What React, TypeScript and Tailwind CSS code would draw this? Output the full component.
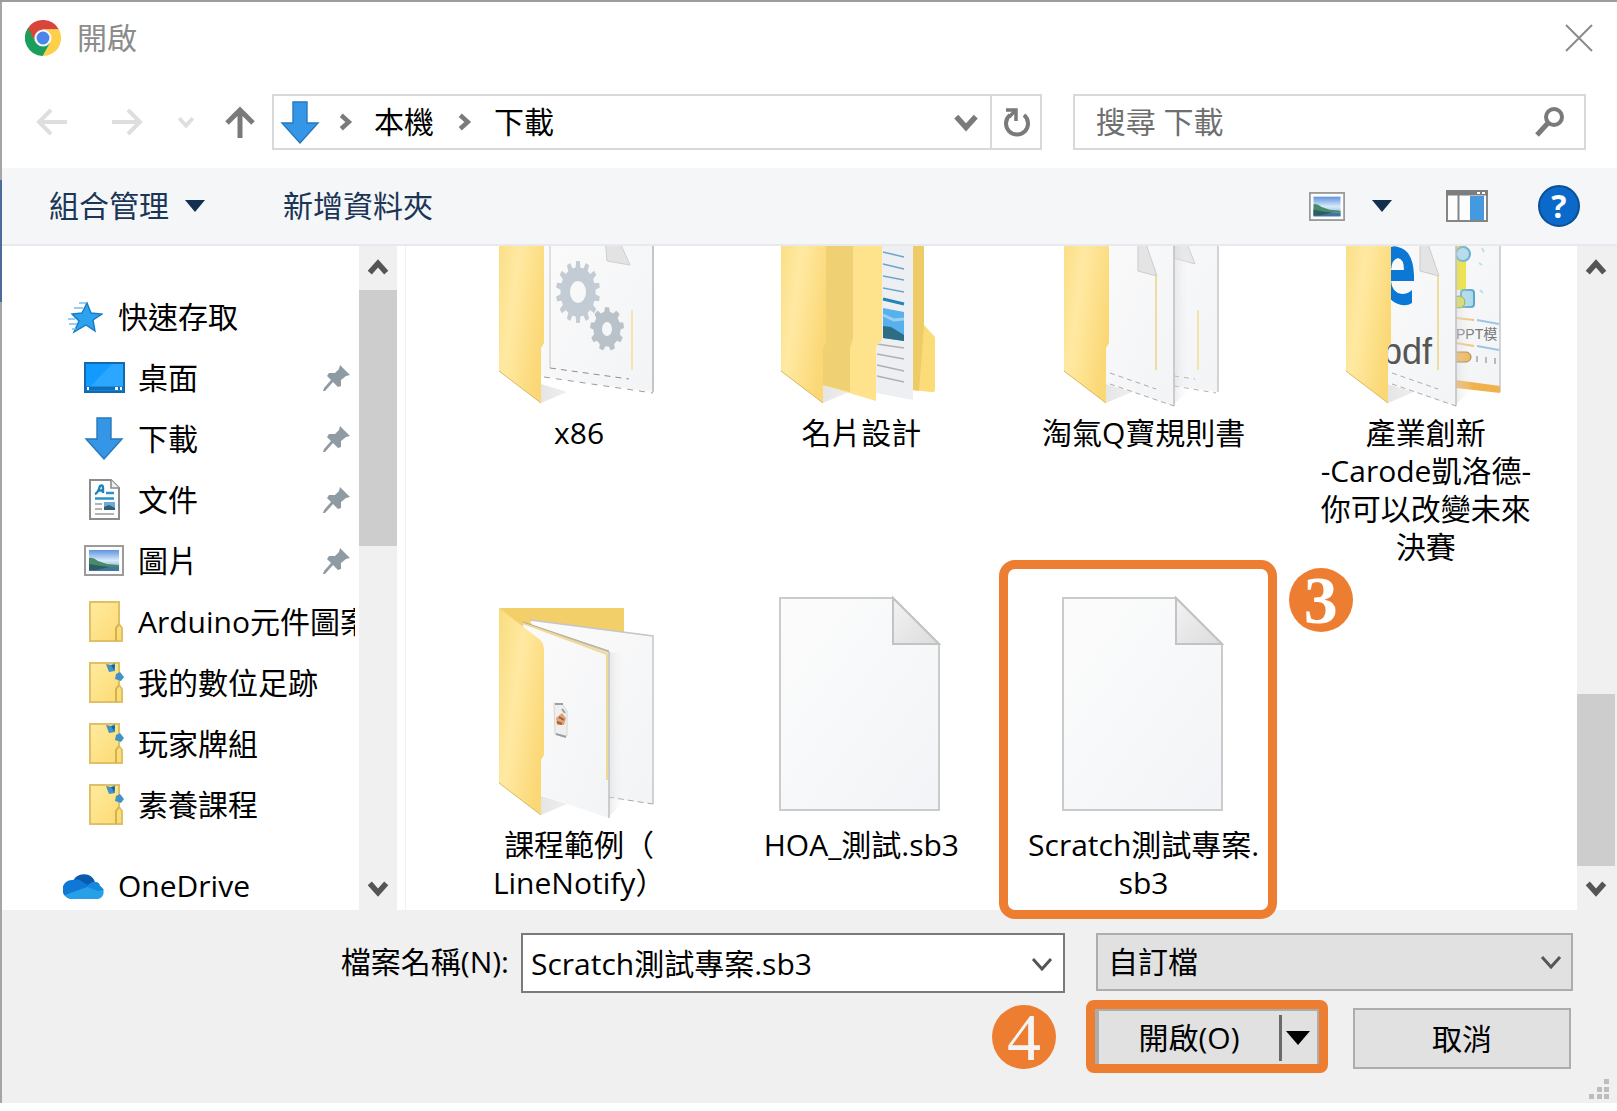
import React from "react";

const ink = "#7a7a7a";

function ChromeLogo() {
  return (
    <svg width="36" height="36" viewBox="0 0 36 36" aria-hidden="true">
      <path d="M18 9.5 H33.9 L33.6 9 A18 18 0 0 0 2.4 9 L10.5 22 Z" fill="#d8453a" />
      <path d="M25.4 22.2 L17.6 36 A18 18 0 0 0 33.9 9.5 H18 Z" fill="#fdd047" />
      <path d="M10.6 22.2 L3 8 A18 18 0 0 0 17.6 36 L25.4 22.2 Z" fill="#1a9f5b" />
      <circle cx="18" cy="18" r="8.6" fill="#f4f6fa" />
      <circle cx="18" cy="18" r="6.4" fill="#4a86e8" />
    </svg>
  );
}

function DownArrow() {
  return (
    <svg width="40" height="43" viewBox="0 0 40 43" aria-hidden="true">
      <path d="M13 1 H27 V22 H38 L20 42 L2 22 H13 Z" fill="#3595e6" stroke="#2878bd" strokeWidth="1.4" />
    </svg>
  );
}

function Chevron({ dir, size, color, weight }: { dir: "up" | "down" | "right"; size: number; color: string; weight: number }) {
  const d = dir === "up" ? "M3 17 L12 7 L21 17" : dir === "down" ? "M3 7 L12 17 L21 7" : "M7 3 L17 12 L7 21";
  return (
    <svg width={size} height={size} viewBox="0 0 24 24" fill="none" stroke={color} strokeWidth={weight} aria-hidden="true">
      <path d={d} />
    </svg>
  );
}

function Triangle({ color }: { color: string }) {
  return (
    <svg width="20" height="12" viewBox="0 0 20 12" aria-hidden="true">
      <path d="M0 0 H20 L10 12 Z" fill={color} />
    </svg>
  );
}

function PictureIcon({ width, height }: { width: number; height: number }) {
  return (
    <svg width={width} height={height} viewBox="0 0 40 31" preserveAspectRatio="none" aria-hidden="true">
      <defs>
        <linearGradient id="sky" x1="0" y1="0" x2="0" y2="1">
          <stop offset="0" stopColor="#5f93e0" />
          <stop offset="0.5" stopColor="#d6eaf8" />
          <stop offset="1" stopColor="#6fa3cc" />
        </linearGradient>
      </defs>
      <rect x="1" y="1" width="38" height="29" fill="#fdfdfd" stroke="#9b9b9b" strokeWidth="2" />
      <rect x="5" y="5" width="30" height="21" fill="url(#sky)" />
      <path d="M5 13 Q9 12 14 16 L23 19 L35 20 V22 H5 Z" fill="#4a8a6c" />
      <path d="M5 22 H35 V26 H5 Z" fill="#44759f" />
      <path d="M5 19 L17 21 L26 22 L12 25 L5 25 Z" fill="#2c5e63" />
    </svg>
  );
}

function StarIcon() {
  return (
    <svg width="38" height="34" viewBox="0 0 38 34" aria-hidden="true">
      <path d="M22 3 L26 13 L37 14 L28 20 L30 31 L21 25 L9 32 L14 21 L7 14 L17 13 Z" fill="#2da3ef" stroke="#1979c4" strokeWidth="1.4" />
      <path d="M14 3 H21 M9 8 H18 M4 24 H12 M7 29 H11 M3 19 H10" stroke="#74bdf0" strokeWidth="1.6" />
    </svg>
  );
}

function DesktopIcon() {
  return (
    <svg width="41" height="31" viewBox="0 0 41 31" aria-hidden="true">
      <rect x="1" y="1" width="39" height="29" fill="#129bff" stroke="#1269ae" strokeWidth="2" />
      <path d="M28 2 H39 V25 H6 Z" fill="#2ba7ff" />
      <path d="M2 26.500 H39" stroke="#0c70bd" strokeWidth="4" />
      <path d="M3 26.500 H5 M31 26.500 H34 M36 26.500 H38" stroke="#fff" strokeWidth="3" />
    </svg>
  );
}

function DocumentIcon() {
  return (
    <svg width="31" height="41" viewBox="0 0 31 41" aria-hidden="true">
      <path d="M1 1 H22 L30 9 V40 H1 Z" fill="#fdfdfd" stroke="#8b8b8b" strokeWidth="2" />
      <path d="M22 1 V9 H30" fill="#eee" stroke="#8b8b8b" strokeWidth="1.600" />
      <path d="M6 15 Q9 14 11 7 Q14 5 14 9 V14 M9 11.500 H15" fill="none" stroke="#1c83b8" strokeWidth="2.400" />
      <path d="M17 14 H25 M6 19.500 H25" stroke="#2d93c4" strokeWidth="2.400" />
      <path d="M6 25 H13 M6 30 H13 M6 35 H25" stroke="#9a9a9a" strokeWidth="1.600" />
      <rect x="15" y="23" width="11" height="8" fill="#6aaad8" />
      <path d="M15 28 L20 26 L26 29 V31 H15 Z" fill="#2f5f74" />
    </svg>
  );
}

function FolderIcon({ synced }: { synced?: boolean }) {
  return (
    <svg width="42" height="42" viewBox="-6 0 42 42" aria-hidden="true">
      <defs>
        <linearGradient id="folderSmall" x1="0" y1="0" x2="1" y2="1">
          <stop offset="0" stopColor="#ffeb9f" />
          <stop offset="1" stopColor="#fbda71" />
        </linearGradient>
      </defs>
      <path d="M1 1 H30 V23 L33 27 V40 H1 Z" fill="url(#folderSmall)" stroke="#dfc066" strokeWidth="2" />
      <path d="M27 40 V27 L30 23" fill="none" stroke="#d5b14e" strokeWidth="2" />
      {synced && (
        <g fill="#3f93c8">
          <path d="M17 2 L22 3 L26 1 V9 L20 10 Z" />
          <path d="M27 12 L31 10 L35 15 L32 19 L26 17 Z" />
          <path d="M22 3 L26 3 L25 8 Z" fill="#17658f" />
        </g>
      )}
    </svg>
  );
}

function CloudIcon() {
  return (
    <svg width="42" height="28" viewBox="0 0 42 28" aria-hidden="true">
      <path d="M10 9 A12 12 0 0 1 32 10 L24 19 Z" fill="#0a5bb0" />
      <path d="M8 27 A9 9 0 0 1 10 8 Q15 6 20 10 L33 18 L20 27 Z" fill="#0f78d4" />
      <path d="M24 15 Q27 10 32 10 Q36 10 37 14 A7 7 0 0 1 35 27 H8 Q4 26 2 23 Z" fill="#28a0e8" />
      <path d="M24 15 Q27 10 32 10 Q36 10 37 14 L41 18 L35 19 Z" fill="#1589dc" />
    </svg>
  );
}

function PinIcon() {
  return (
    <svg width="28" height="28" viewBox="0 0 28 28" aria-hidden="true">
      <path d="M17 1 L27 11 L23 12 L18 16 L18 22 L15 23 L10 18 L2 27 L0 27 L1 24 L8 16 L4 12 L6 9 L12 9 L16 5 Z" fill="#8f9ba3" />
    </svg>
  );
}

function FolderFrame({ top, children }: { top?: boolean; children?: React.ReactNode }) {
  return (
    <svg width="184" height="230" viewBox="0 0 184 230" aria-hidden="true" className="shrink-0">
      <defs>
        <linearGradient id="flap" x1="0" y1="0" x2="1" y2="0.6">
          <stop offset="0" stopColor="#f9dc7e" />
          <stop offset="0.45" stopColor="#ffe9a2" />
          <stop offset="1" stopColor="#fbd876" />
        </linearGradient>
        <linearGradient id="paper" x1="0" y1="0" x2="1" y2="1">
          <stop offset="0" stopColor="#fbfbfb" />
          <stop offset="1" stopColor="#f3f4f6" />
        </linearGradient>
        <linearGradient id="shade" x1="0" y1="0" x2="1" y2="0">
          <stop offset="0" stopColor="#d4d4d4" />
          <stop offset="1" stopColor="#ffffff" stopOpacity="0" />
        </linearGradient>
      </defs>
      <path d="M54 225 V206 L80 214 Z M166 214 V203 L184 206 Z" fill="url(#shade)" opacity="0.6" />
      {top && <path d="M12 18 H137 V60 H40 Z" fill="#f3cf6a" />}
      {children}
      <path d="M12 18 L52 49 Q57 53 57 60 V165 L54 170 V225 L12 193 Z" fill="url(#flap)" />
      <path d="M12 193 L54 225" stroke="#d9b95c" strokeWidth="1" />
    </svg>
  );
}

function gearPath(cx: number, cy: number, rx: number, ry: number, teeth: number) {
  const pts: string[] = [];
  for (let i = 0; i < teeth; i++) {
    [[-0.3, 0.8], [-0.18, 1], [0.18, 1], [0.3, 0.8]].forEach(([o, r]) => {
      const a = ((i + o) / teeth) * Math.PI * 2 - Math.PI / 2;
      pts.push(`${(cx + Math.cos(a) * rx * r).toFixed(1)} ${(cy + Math.sin(a) * ry * r).toFixed(1)}`);
    });
  }
  return `M${pts.join(" L")} Z`;
}

function hole(cx: number, cy: number, rx: number, ry: number) {
  return ` M${cx - rx} ${cy} a${rx} ${ry} 0 1 0 ${rx * 2} 0 a${rx} ${ry} 0 1 0 ${-rx * 2} 0 Z`;
}

function GearFolder() {
  return (
    <FolderFrame>
      <path d="M50 30 L166 46 V214 L50 198 Z" fill="url(#paper)" />
      <path d="M166 46 V214" stroke="#c3c5c8" strokeWidth="2" />
      <path d="M63 60 V190" fill="none" stroke="#c6c6c6" />
      <path d="M63 190 L142 201" stroke="#8e8e8e" strokeDasharray="6 5" />
      <path d="M57 199 L166 215" stroke="#9b9b9b" strokeDasharray="6 6" />
      <path d="M118 60 L120 83 L143 87 L131 60 Z" fill="#e3e3e3" stroke="#cfcfcf" />
      <path d="M145 132 V192" stroke="#f3e3ae" strokeWidth="2" />
      <path fillRule="evenodd" fill="#c3ccd4" d={gearPath(91, 114, 22, 31, 14) + hole(91, 114, 8, 11)} />
      <path fillRule="evenodd" fill="#b9c2c9" d={gearPath(120, 151, 17, 22, 9) + hole(120, 151, 5, 7)} />
    </FolderFrame>
  );
}

function NestedFolder() {
  return (
    <FolderFrame>
      <path d="M144 50 H155 V147 L166 159 V211 Q166 215 162 214 L144 212 Z" fill="#fcdc79" />
      <path d="M144 50 H155 V147 L150 213 L144 212 Z" fill="#edcb67" />
      <path d="M107 40 H144 V222 L107 215 Z" fill="#eeeff2" />
      <path d="M114 74 L135 79 M114 86 L135 91 M114 98 L135 102 M114 110 L135 114" stroke="#6ba6cb" strokeWidth="1.500" />
      <path d="M114 121 L135 126" stroke="#2583b8" strokeWidth="3" />
      <path d="M114 130 L135 134 V163 L114 160 Z" fill="#58b0ec" />
      <path d="M114 148 L122 149 L135 157 V163 L114 160 Z" fill="#2d6c83" />
      <path d="M114 137 L125 142 L135 141" stroke="#9ad0f2" strokeWidth="3" fill="none" />
      <path d="M108 166 L135 170 M108 176 L135 181 M108 187 L135 193 M108 198 L135 204" stroke="#aeb0b3" strokeWidth="1.500" />
      <path d="M50 40 H113 V162 L107 169 V223 L50 206 Z" fill="#ffe28c" />
      <path d="M50 40 H84 V160 L81 170 V214 L50 206 Z" fill="#efd173" />
    </FolderFrame>
  );
}

function TwoPages({ first, second }: { first?: React.ReactNode; second?: React.ReactNode }) {
  return (
    <>
      <path d="M43 30 L166 46 V214 L110 206 Z" fill="url(#paper)" />
      <path d="M43 30 L166 46 V214" fill="none" stroke="#c4c6c8" strokeWidth="1.500" />
      {second ?? (
        <>
          <path d="M122 80 L143 86 L133 60 L122 60 Z" fill="#e7e7e7" stroke="#cfcfcf" />
          <path d="M146 132 V192" stroke="#f3e3ae" strokeWidth="2" />
          <path d="M122 198 L143 201 M122 208 L164 215" stroke="#b0b0b0" strokeDasharray="5 5" />
        </>
      )}
      <path d="M122 62 L140 64 V210 L122 226 Z" fill="url(#shade)" opacity="0.45" />
      <path d="M36 33 L122 62 V228 L50 204 Z" fill="url(#paper)" />
      <path d="M36 33 L122 62 V228" fill="none" stroke="#bfc0c2" strokeWidth="1.500" />
      {first}
    </>
  );
}

function PageFold() {
  return (
    <>
      <path d="M86 60 V93 L105 98 L92 60 Z" fill="#e4e4e4" stroke="#cccccc" />
      <path d="M104 98 V192" stroke="#f1dca0" strokeWidth="2" />
      <path d="M58 195 L104 211 M58 206 L122 228" stroke="#ababab" strokeDasharray="5 4" />
    </>
  );
}

function PagesFolder() {
  return (
    <FolderFrame>
      <TwoPages first={<PageFold />} />
    </FolderFrame>
  );
}

function PdfFolder() {
  return (
    <FolderFrame>
      <TwoPages
        first={
          <>
            <PageFold />
            <path
              fillRule="evenodd"
              fill="#0a78d4"
              d="M50 76 Q56 66 64 69 Q79 72 80 97 V103 H57 Q58 115 68 116 Q74 116 78 112 V125 Q72 129 64 126 Q52 122 50 104 Z M57 92 H70 Q70 81 64 80 Q58 81 57 92 Z"
            />
            <text x="48" y="186" fontSize="36" fill="#555" fontFamily="Liberation Sans, sans-serif">pdf</text>
          </>
        }
        second={
          <>
            <path d="M122 60 H132 V112 H122 Z" fill="#efe21b" />
            <circle cx="129" cy="76" r="7" fill="#a7d9ec" stroke="#5ba6c6" strokeWidth="2" />
            <rect x="127" y="112" width="13" height="17" rx="3" fill="#a7d9ec" stroke="#5ba6c6" strokeWidth="2" />
            <circle cx="125" cy="124" r="6" fill="#d5d94a" stroke="#7c9a3a" />
            <path d="M145 85 l3 2 M148 70 l2 4 M146 112 l3 3" stroke="#bcdff0" strokeWidth="2" />
            <path d="M122 140 L140 142 M122 165 L140 168" stroke="#f1c27c" strokeWidth="2" />
            <path d="M143 142 L165 146 M143 168 L165 172" stroke="#9fc4e0" strokeWidth="2" />
            <text x="122" y="161" fontSize="14" fill="#777" fontFamily="Liberation Sans, Noto Sans CJK TC, sans-serif">PPT模</text>
            <rect x="117" y="174" width="20" height="10" rx="5" fill="#f0b04e" stroke="#9c7b4a" />
            <path d="M143 178 v6 M152 179 v6 M161 180 v6" stroke="#b9b9b9" strokeWidth="2" />
            <path d="M122 202 L166 208 V215 L122 210 Z" fill="#efb14e" />
          </>
        }
      />
    </FolderFrame>
  );
}

function CourseFolder() {
  return (
    <FolderFrame top>
      <TwoPages
        first={
          <>
            <path d="M36 33 L120 64 V190" fill="none" stroke="#f1d995" strokeWidth="2" />
            <path d="M36 32 L122 61" stroke="#b8ac8a" />
            <path d="M67 113 L76 115 L80 121 V146 L68 144 Z" fill="#efefef" stroke="#d6d6d6" />
            <path d="M68 114 h8 M75 119 l3 4 M69 144 l10 3" stroke="#9aa0a2" strokeWidth="2" />
            <path d="M69 128 l6 -5 l4 5 l-2 7 l-7 0 Z" fill="#e0a477" />
            <path d="M72 127 l5 3 M70 132 l5 2" stroke="#9c5f3e" strokeWidth="2" />
          </>
        }
        second={<path d="M121 207 L166 214" stroke="#a9a9a9" strokeDasharray="6 4" />}
      />
    </FolderFrame>
  );
}

function BlankFile() {
  return (
    <svg width="184" height="230" viewBox="0 0 184 230" aria-hidden="true" className="shrink-0">
      <defs>
        <linearGradient id="sheet" x1="0" y1="0" x2="1" y2="1">
          <stop offset="0" stopColor="#fcfcfc" />
          <stop offset="1" stopColor="#f2f4f7" />
        </linearGradient>
        <linearGradient id="corner" x1="0" y1="0" x2="1" y2="1">
          <stop offset="0" stopColor="#f3f3f3" />
          <stop offset="1" stopColor="#dcdcdc" />
        </linearGradient>
      </defs>
      <path d="M11 8 H124 L170 54 V220 H11 Z" fill="url(#sheet)" stroke="#cacccc" strokeWidth="2" />
      <path d="M124 8 V54 H170 Z" fill="url(#corner)" stroke="#c3c3c3" strokeWidth="2" />
    </svg>
  );
}

type Place = { label: string; icon: React.ReactNode; pinned?: boolean; root?: boolean };

const places: Place[] = [
  { label: "快速存取", icon: <StarIcon />, root: true },
  { label: "桌面", icon: <DesktopIcon />, pinned: true },
  { label: "下載", icon: <DownArrow />, pinned: true },
  { label: "文件", icon: <DocumentIcon />, pinned: true },
  { label: "圖片", icon: <PictureIcon width={40} height={31} />, pinned: true },
  { label: "Arduino元件圖案", icon: <FolderIcon /> },
  { label: "我的數位足跡", icon: <FolderIcon synced /> },
  { label: "玩家牌組", icon: <FolderIcon synced /> },
  { label: "素養課程", icon: <FolderIcon synced /> },
];

type Item = { lines: string[]; icon: React.ReactNode; step?: string };

const items: Item[] = [
  { lines: ["x86"], icon: <GearFolder /> },
  { lines: ["名片設計"], icon: <NestedFolder /> },
  { lines: ["淘氣Q寶規則書"], icon: <PagesFolder /> },
  { lines: ["產業創新", "-Carode凱洛德-", "你可以改變未來", "決賽"], icon: <PdfFolder /> },
  { lines: ["課程範例（", "LineNotify）"], icon: <CourseFolder /> },
  { lines: ["HOA_測試.sb3"], icon: <BlankFile /> },
  { lines: ["Scratch測試專案.", "sb3"], icon: <BlankFile />, step: "3" },
];

function PlaceRow({ place }: { place: Place }) {
  return (
    <li>
      <button type="button" className={`flex h-[61px] w-full items-center gap-3 pr-2 ${place.root ? "pl-[60px]" : "pl-20"}`}>
        <span className="flex w-11 shrink-0 justify-center">{place.icon}</span>
        <span className="-mr-1 min-w-0 flex-1 overflow-x-clip whitespace-nowrap text-left">{place.label}</span>
        {place.pinned && <PinIcon />}
      </button>
    </li>
  );
}

function ScrollBar({ before, thumb, after }: { before: string; thumb: string; after: string }) {
  return (
    <div className="flex w-[38px] shrink-0 flex-col items-center bg-[#f0f0f0]">
      <button type="button" aria-label="向上捲動" className="flex h-11 w-full items-center justify-center">
        <Chevron dir="up" size={22} color="#555555" weight={6} />
      </button>
      <div className={before} />
      <div className={`w-full bg-[#cdcdcd] ${thumb}`} />
      <div className={after} />
      <button type="button" aria-label="向下捲動" className="flex h-11 w-full items-center justify-center">
        <Chevron dir="down" size={22} color="#555555" weight={6} />
      </button>
    </div>
  );
}

export default function App() {
  return (
    <div className="flex h-screen min-h-[900px] flex-col bg-white pb-2 font-['Open_Sans','Noto_Sans_CJK_TC',sans-serif] text-[30px] leading-[38px] text-black">
      <div className="flex min-h-0 flex-1 border-t-2 border-[#9c9c9c]">
        <div className="w-[2px] shrink-0 bg-[linear-gradient(#a5a5a5_0_178px,#4d6b9a_178px_300px,#a5a5a5_300px)]" />
        <div className="flex min-w-0 flex-1 flex-col">
          <header className="flex h-[72px] shrink-0 items-center pl-[23px] pr-6">
            <ChromeLogo />
            <h1 className="ml-4 flex-1 text-[#8c8c8c]">開啟</h1>
            <button type="button" aria-label="關閉">
              <svg width="28" height="28" viewBox="0 0 28 28" stroke="#8b8b8b" strokeWidth="2" aria-hidden="true">
                <path d="M1 1 L27 27 M27 1 L1 27" />
              </svg>
            </button>
          </header>

          <nav className="flex h-[94px] shrink-0 items-center pl-3 pr-[31px] pt-[2px]">
            <button type="button" aria-label="上一頁" className="flex w-[75px] justify-center">
              <svg width="32" height="28" viewBox="0 0 32 28" fill="none" stroke="#dedede" strokeWidth="4" aria-hidden="true">
                <path d="M31 14 H3 M15 2 L3 14 L15 26" />
              </svg>
            </button>
            <button type="button" aria-label="下一頁" className="flex w-[75px] justify-center">
              <svg width="32" height="28" viewBox="0 0 32 28" fill="none" stroke="#dedede" strokeWidth="4" aria-hidden="true">
                <path d="M1 14 H29 M17 2 L29 14 L17 26" />
              </svg>
            </button>
            <button type="button" aria-label="最近的位置" className="flex w-11 justify-center">
              <Chevron dir="down" size={18} color="#dedede" weight={5} />
            </button>
            <button type="button" aria-label="上一層" className="flex w-16 justify-center">
              <svg width="30" height="32" viewBox="0 0 30 32" fill="none" stroke={ink} strokeWidth="5" aria-hidden="true">
                <path d="M15 32 V4 M2 17 L15 4 L28 17" />
              </svg>
            </button>
            <div className="grid min-w-0 flex-1 grid-cols-[3fr_2fr] gap-[31px]">
              <div className="flex h-14 min-w-0 border-2 border-[#d9d9d9]">
                <div className="flex flex-1 items-center pl-[6px]">
                  <DownArrow />
                  <span className="ml-4"><Chevron dir="right" size={18} color={ink} weight={6} /></span>
                  <button type="button" className="ml-5">本機</button>
                  <span className="mx-[21px]"><Chevron dir="right" size={18} color={ink} weight={6} /></span>
                  <button type="button">下載</button>
                </div>
                <button type="button" aria-label="先前的位置" className="flex w-12 items-center justify-center">
                  <Chevron dir="down" size={26} color={ink} weight={5} />
                </button>
                <button type="button" aria-label="重新整理" className="flex w-[50px] items-center justify-center border-l-2 border-[#d9d9d9]">
                  <svg width="28" height="32" viewBox="0 0 28 32" fill="none" stroke={ink} strokeWidth="4" aria-hidden="true">
                    <path d="M22 9 A11 11 0 1 1 8 9" />
                    <path d="M4 4 H14 V15 M14 4 L7 11" strokeWidth="3.500" />
                  </svg>
                </button>
              </div>
              <label className="flex h-14 min-w-0 items-center border-2 border-[#d9d9d9] pl-[21px] pr-[19px]">
                <input type="search" aria-label="搜尋 下載" placeholder="搜尋 下載" className="min-w-0 flex-1 outline-none placeholder:text-[#6f6f6f]" />
                <svg width="30" height="30" viewBox="0 0 30 30" fill="none" stroke={ink} aria-hidden="true">
                  <circle cx="19" cy="10" r="8" strokeWidth="4" />
                  <path d="M13 16 L2 28" strokeWidth="5" />
                </svg>
              </label>
            </div>
          </nav>

          <div className="relative z-10 flex h-[78px] shrink-0 items-center border-b-2 border-[#e7e9ec] bg-[#f4f6f8] pl-[47px] pr-[37px] text-[#1b3556]">
            <button type="button" className="flex items-center gap-4">
              組合管理
              <Triangle color="#15304f" />
            </button>
            <button type="button" className="ml-[78px]">新增資料夾</button>
            <div className="ml-auto flex items-center">
              <button type="button" aria-label="檢視"><PictureIcon width={36} height={29} /></button>
              <button type="button" aria-label="更多檢視選項" className="ml-[27px] flex"><Triangle color="#15304f" /></button>
              <button type="button" aria-label="預覽窗格" className="ml-[54px]">
                <svg width="42" height="32" viewBox="0 0 42 32" aria-hidden="true">
                  <rect x="1" y="1" width="40" height="30" fill="#fdfdfd" stroke="#858585" strokeWidth="2" />
                  <path d="M0 3 H42" stroke="#7d7d7d" strokeWidth="5" />
                  <path d="M31 3 h3 M36 3 h3" stroke="#fff" strokeWidth="2" />
                  <path d="M12.500 5 V30" stroke="#858585" strokeWidth="2" />
                  <rect x="24" y="6" width="14" height="24" fill="#4499e0" />
                </svg>
              </button>
              <button type="button" aria-label="說明" className="ml-[50px] flex size-[42px] items-center justify-center rounded-full border-2 border-[#0c4f94] bg-[#0a69c9] text-[32px] font-bold text-white">
                ?
              </button>
            </div>
          </div>

          <main className="flex min-h-0 flex-1">
            <aside className="flex w-[395px] shrink-0">
              <div className="min-w-0 flex-1 pt-10">
                <ul>
                  {places.map((p) => <PlaceRow key={p.label} place={p} />)}
                </ul>
                <ul className="pt-5">
                  <PlaceRow place={{ label: "OneDrive", icon: <CloudIcon />, root: true }} />
                </ul>
              </div>
              <ScrollBar before="h-0" thumb="h-64" after="flex-1" />
            </aside>
            <section className="ml-2 flex min-w-0 flex-1 flex-col justify-end border-l border-[#f0f0f0] pb-2 pl-8 pr-[10px]">
              <div className="grid grid-cols-4 gap-y-6">
                {items.map((item) => (
                  <div key={item.lines.join("")} className="relative flex justify-center">
                    <button type="button" className="flex flex-col items-center justify-start gap-[6px]">
                      {item.icon}
                      <span className="block text-center">
                        {item.lines.map((line) => (
                          <span key={line} className="block whitespace-nowrap">{line}</span>
                        ))}
                      </span>
                    </button>
                    {item.step && (
                      <>
                        <div className="pointer-events-none absolute -bottom-[17px] -left-1 -top-[30px] right-2 z-10 rounded-2xl border-[9px] border-[#ed7d31]" />
                        <div className="absolute -right-[68px] -top-[22px] flex size-16 items-center justify-center rounded-full bg-[#ed7d31] font-['Liberation_Serif',serif] text-[68px] font-bold leading-none text-white">
                          {item.step}
                        </div>
                      </>
                    )}
                  </div>
                ))}
              </div>
            </section>
            <ScrollBar before="flex-1" thumb="h-[172px]" after="h-0" />
            <div className="w-[2px] shrink-0 bg-[#f0f0f0]" />
          </main>

          <footer className="relative shrink-0 bg-[#f0f0f0] pb-[30px] pt-[23px]">
            <div className="flex items-start pr-11">
              <label htmlFor="filename" className="w-[519px] shrink-0 pr-3 pt-[10px] text-right">檔案名稱(N):</label>
              <div className="flex h-[60px] min-w-0 flex-1 items-center border-2 border-[#7a7a7a] bg-white pl-2 pr-[9px] pt-[2px]">
                <input id="filename" type="text" defaultValue="Scratch測試專案.sb3" className="min-w-0 flex-1 outline-none" />
                <button type="button" aria-label="顯示檔案清單"><Chevron dir="down" size={24} color="#555555" weight={3} /></button>
              </div>
              <div className="relative ml-[31px] w-[477px] shrink-0">
                <select aria-label="檔案類型" className="h-[58px] w-full appearance-none border-2 border-[#adadad] bg-[#e1e1e1] pl-[10px] outline-none">
                  <option>自訂檔</option>
                </select>
                <span className="pointer-events-none absolute right-[10px] top-[17px]"><Chevron dir="down" size={24} color="#555555" weight={3} /></span>
              </div>
            </div>
            <div className="mt-[7px] flex items-center justify-end pr-[46px]">
              <div className="mr-[30px] flex size-16 items-center justify-center rounded-full bg-[#ed7d31] font-['Liberation_Serif',serif] text-[68px] leading-none text-[#f4f4f4]">
                4
              </div>
              <div className="flex h-[73px] w-[242px] rounded-lg border-[9px] border-[#ed7d31] bg-[#e1e1e1]">
                <button type="button" className="flex-1 border-l-4 border-t-2 border-[#adadad]">開啟(O)</button>
                <button type="button" aria-label="開啟選項" className="flex w-10 items-center border-r-2 border-t-2 border-[#adadad]">
                  <span className="mr-1 h-[46px] w-[3px] bg-[#6a6a6a]" />
                  <svg width="24" height="14" viewBox="0 0 24 14" aria-hidden="true"><path d="M0 0 H24 L12 14 Z" fill="#000" /></svg>
                </button>
              </div>
              <button type="button" className="ml-[25px] mt-1 h-[61px] w-[218px] border-2 border-[#adadad] bg-[#e1e1e1]">取消</button>
            </div>
            <svg width="20" height="20" viewBox="0 0 20 20" fill="#bdbdbd" className="absolute bottom-1 right-2" aria-hidden="true">
              <path d="M15 0 h5 v5 h-5 Z M15 8 h5 v5 h-5 Z M8 8 h5 v5 h-5 Z M15 15 h5 v5 h-5 Z M8 15 h5 v5 h-5 Z M0 15 h5 v5 h-5 Z" />
            </svg>
          </footer>
        </div>
      </div>
    </div>
  );
}
